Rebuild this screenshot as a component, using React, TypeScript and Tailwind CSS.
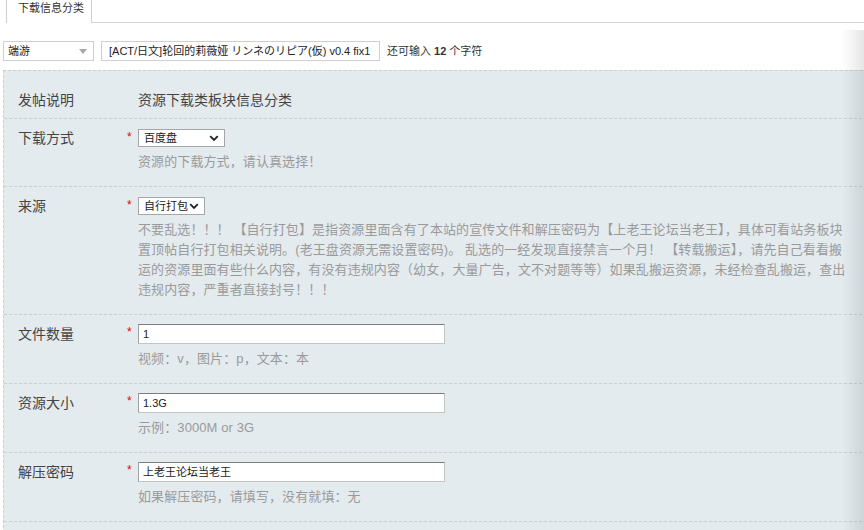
import React from "react";

const Chevron = () => (
  <svg width="10" height="7" viewBox="0 0 10 7" className="shrink-0">
    <path d="M1.2 1.2 L5 5 L8.8 1.2" fill="none" stroke="#222" strokeWidth="1.8" />
  </svg>
);

function FakeSelect({ value, width }: { value: string; width: string }) {
  return (
    <div
      className={`${width} h-[18px] flex items-center justify-between bg-white border border-[#a6a6a6] pl-[5px] pr-[5px] text-[11px] text-[#222] leading-[16px]`}
    >
      <span>{value}</span>
      <Chevron />
    </div>
  );
}

function FakeInput({ value }: { value: string }) {
  return (
    <div className="w-[307px] h-[20px] flex items-center bg-white border border-[#c4c4c4] border-t-[#7d7d7d] border-l-[#a0a0a0] pl-[4px] text-[11px] text-[#222]">
      {value}
    </div>
  );
}

function Star() {
  return (
    <div className="w-[14px] shrink-0 pl-[3px] text-[12px] leading-[14px] text-[#e00] pt-[1px]">*</div>
  );
}

function Help({ children }: { children: React.ReactNode }) {
  return <div className="mt-[5px] text-[13px] leading-[20px] text-[#9a9a9a] whitespace-nowrap tracking-[0.1px]">{children}</div>;
}

export default function App() {
  return (
    <div className="relative w-[864px] h-[530px] overflow-hidden bg-white font-['Liberation_Sans','Noto_Sans_CJK_SC',sans-serif] text-[#444]">
      {/* tabs */}
      <div className="flex h-[23px]">
        <div className="w-[6px]" />
        <div className="w-[86px] h-[23px] border-l border-r border-[#cfcfcf] bg-white pl-[11px] text-[11px] leading-[16px] text-[#333]">
          下载信息分类
        </div>
        <div className="flex-1 border-b border-[#d6d6d6]" />
      </div>

      {/* title row */}
      <div className="flex items-center mt-[18px] pl-[3px] h-[20px]">
        <div className="w-[91px] h-[20px] flex items-center justify-between bg-white border border-[#cfcfcf] pl-[4px] pr-[6px] text-[11px] text-[#222]">
          <span>端游</span>
          <svg width="8" height="5" viewBox="0 0 8 5">
            <path d="M0 0 L8 0 L4 5 Z" fill="#a8a8a8" />
          </svg>
        </div>
        <div className="ml-[7px] w-[279px] h-[20px] flex items-center bg-white border border-[#cfcfcf] pl-[7px] text-[11px] text-[#222] whitespace-nowrap">
          [ACT/日文]轮回的莉薇娅 リンネのリピア(仮) v0.4 fix1
        </div>
        <div className="ml-[7px] text-[11px] text-[#333] whitespace-nowrap">
          还可输入 <b className="font-bold">12</b> 个字符
        </div>
      </div>

      {/* panel */}
      <div className="mt-[9px] ml-[3px] w-[1000px] bg-[#e4ebef] border border-dashed border-[#c9d0d4]">
        {/* row 1 */}
        <div className="flex pt-[19px] pb-[8px] border-b border-dashed border-[#c9d0d4] text-[14px] leading-[20px]">
          <div className="w-[120px] pl-[14px] shrink-0">发帖说明</div>
          <div className="w-[14px] shrink-0" />
          <div>资源下载类板块信息分类</div>
        </div>

        {/* row 2 */}
        <div className="flex pt-[10px] pb-[14px] border-b border-dashed border-[#c9d0d4]">
          <div className="w-[120px] pl-[14px] shrink-0 text-[14px] leading-[18px]">下载方式</div>
          <Star />
          <div>
            <FakeSelect value="百度盘" width="w-[87px]" />
            <Help>资源的下载方式，请认真选择！</Help>
          </div>
        </div>

        {/* row 3 */}
        <div className="flex pt-[10px] pb-[14px] border-b border-dashed border-[#c9d0d4]">
          <div className="w-[120px] pl-[14px] shrink-0 text-[14px] leading-[18px]">来源</div>
          <Star />
          <div>
            <FakeSelect value="自行打包" width="w-[67px]" />
            <Help>
              不要乱选！！！ 【自行打包】是指资源里面含有了本站的宣传文件和解压密码为【上老王论坛当老王】，具体可看站务板块
              <br />
              置顶帖自行打包相关说明。(老王盘资源无需设置密码)。 乱选的一经发现直接禁言一个月！ 【转载搬运】，请先自己看看搬
              <br />
              运的资源里面有些什么内容，有没有违规内容（幼女，大量广告，文不对题等等）如果乱搬运资源，未经检查乱搬运，查出
              <br />
              违规内容，严重者直接封号！！！
            </Help>
          </div>
        </div>

        {/* row 4 */}
        <div className="flex pt-[9px] pb-[14px] border-b border-dashed border-[#c9d0d4]">
          <div className="w-[120px] pl-[14px] shrink-0 text-[14px] leading-[20px]">文件数量</div>
          <Star />
          <div>
            <FakeInput value="1" />
            <Help>视频：v，图片：p，文本：本</Help>
          </div>
        </div>

        {/* row 5 */}
        <div className="flex pt-[9px] pb-[14px] border-b border-dashed border-[#c9d0d4]">
          <div className="w-[120px] pl-[14px] shrink-0 text-[14px] leading-[20px]">资源大小</div>
          <Star />
          <div>
            <FakeInput value="1.3G" />
            <Help>示例：3000M or 3G</Help>
          </div>
        </div>

        {/* row 6 */}
        <div className="flex pt-[9px] pb-[14px] border-b border-dashed border-[#c9d0d4]">
          <div className="w-[120px] pl-[14px] shrink-0 text-[14px] leading-[20px]">解压密码</div>
          <Star />
          <div>
            <FakeInput value="上老王论坛当老王" />
            <Help>如果解压密码，请填写，没有就填：无</Help>
          </div>
        </div>

        <div className="h-[40px]" />
      </div>

      {/* right scroll shadow */}
      <div className="absolute right-0 top-[30px] bottom-0 w-[22px] bg-linear-to-r from-transparent to-black/10 pointer-events-none" />
    </div>
  );
}
